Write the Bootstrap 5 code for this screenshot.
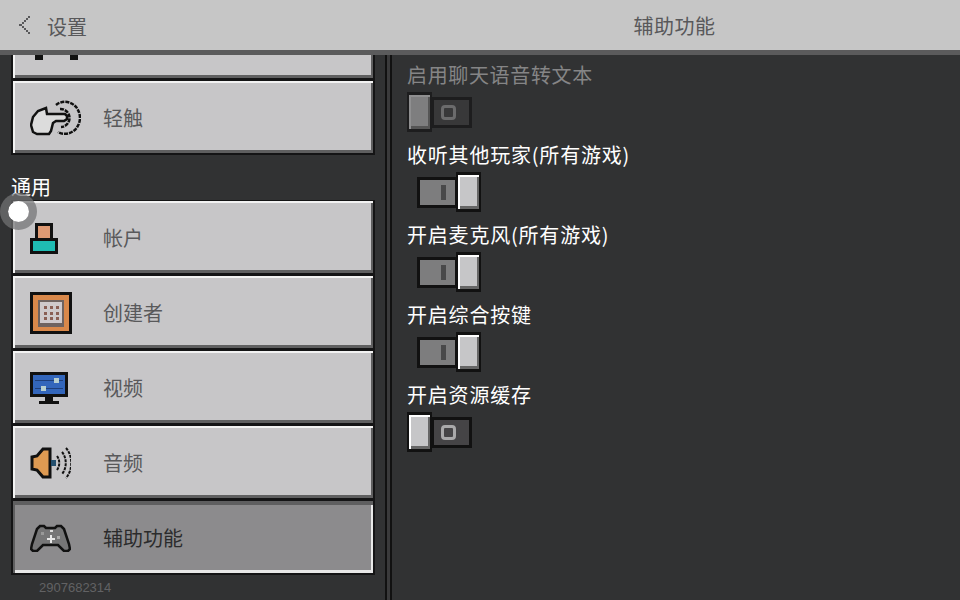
<!DOCTYPE html>
<html lang="zh-CN">
<head>
<meta charset="UTF-8">
<title>辅助功能</title>
<link href="https://cdn.jsdelivr.net/npm/bootstrap@5.3.0/dist/css/bootstrap.min.css" rel="stylesheet">
<style>
  html, body { height: 100%; }
  body {
    width: 960px; height: 600px; overflow: hidden; position: relative;
    background: #313233; color: #fff;
    font-family: "Noto Sans CJK SC", "Liberation Sans", sans-serif; font-size: 20px; line-height: 1;
  }
  .top-bar { height: 55px; background: #c6c6c6; border-bottom: 5px solid #5b5b5c; color: #58585a; }
  .top-left { width: 392px; padding-left: 19px; }
  .top-left svg { margin-right: 17px; }
  .top-left span { padding-top: 3px; }
  .top-title { padding: 1px 3px 0 0; letter-spacing: .5px; }
  .main-area { height: 545px; }
  .side-pane { width: 385px; padding-left: 11px; }
  .pane-rule { width: 7px; border-left: 2px solid #111; border-right: 2px solid #111; background: #3a3a3b; }
  .set-pane { padding-left: 15px; letter-spacing: .8px; }
  .menu-btn {
    width: 364px; height: 75px; border: solid #141415; border-width: 1px 2px 2px; padding-top: 2px;
    background: #c7c6c8; color: #59595b;
    box-shadow: inset 2px 2px 0 #f2f2f2, inset -2px -3px 0 #5f5f60;
  }
  .menu-btn.cut { height: 25px; overflow: hidden; border-top: 0; box-shadow: inset 2px 0 0 #f2f2f2, inset -2px -3px 0 #5f5f60; position: relative; }
  .menu-btn.active { background: #8c8b8d; color: #2b2b2c; box-shadow: inset 2px 4px 0 #5f5f60, inset -2px -3px 0 #e8e8e8; }
  .icon-box { width: 90px; padding-left: 17px; }
  .foot-mark { position: absolute; top: 0; width: 8px; height: 5px; background: #111; }
  .group-title { height: 45px; padding-bottom: 3px; }
  .build-id { font: 13px "Liberation Sans", Arial, sans-serif; color: #626264; padding: 5px 0 0 28px; letter-spacing: 0; }
  .opt-block { height: 80px; }
  .opt-label { height: 37px; padding-top: 10px; }
  .opt-label.dim { color: #858586; letter-spacing: .65px; }
  .sw-wrap { height: 40px; }
  .sw-wrap.on { padding-left: 10px; }
  .sw-track { width: 41px; height: 31px; background: #454446; border: 3px solid #111; display: flex; align-items: center; justify-content: center; }
  .sw-wrap.on .sw-track { background: #7d7d7e; margin-right: -2px; padding-left: 11px; }
  .sw-wrap:not(.on) .sw-track { margin-left: -1px; padding-right: 6px; }
  .sw-knob {
    width: 25px; height: 40px; background: #c6c6c8; border: solid #111; border-width: 3px 2px; position: relative; z-index: 1;
    box-shadow: inset 2px 2px 0 #fff, inset -2px -3px 0 #666;
  }
  .sw-ring { width: 15px; height: 15px; border: 3px solid #a9a9aa; border-radius: 4px; }
  .sw-bar { width: 5px; height: 15px; background: #49494a; }
  .is-off .sw-knob { background: #7e7e7f; box-shadow: inset 2px 2px 0 #8f8f90, inset -2px -3px 0 #555; border-color: #1d1d1e; }
  .is-off .sw-track { background: #383839; border-color: #1d1d1e; }
  .is-off .sw-ring { border-color: #6b6b6c; }
  .touch-dot {
    position: absolute; left: 0; top: 193px; width: 37px; height: 37px; border-radius: 50%;
    background: #fff; background-clip: padding-box; border: 8px solid rgba(115,115,117,.72);
  }
</style>
</head>
<body>
  <div class="top-bar d-flex align-items-center">
    <div class="top-left d-flex align-items-center">
      <svg width="11" height="18" viewBox="0 0 11 18" shape-rendering="crispEdges" fill="#58585a"><path d="M9 0h2v2H9zM7 2h2v2H7zM5 4h2v2H5zM3 6h2v2H3zM0 8h3v2H0zM3 10h2v2H3zM5 12h2v2H5zM7 14h2v2H7zM9 16h2v2H9z"/></svg>
      <span>设置</span>
    </div>
    <div class="top-title flex-grow-1 text-center">辅助功能</div>
  </div>

  <div class="main-area d-flex">
    <div class="side-pane">
      <div class="menu-btn cut"><span class="foot-mark" style="left:22px"></span><span class="foot-mark" style="left:57px"></span></div>
      <div class="menu-btn d-flex align-items-center">
        <div class="icon-box">
          <svg width="51" height="36" viewBox="0 0 51 36" fill="none" stroke="#111" stroke-width="2.5">
            <path stroke-dasharray="4 1" d="M26 5A15 16 0 1 1 28 32"/>
            <path stroke-dasharray="4 1" d="M30 9A9 9 0 1 1 31 27"/>
            <path fill="#dcdcdc" d="M1 25l2-8 5-6 8-3 1 6h18l2 2v3l-3 2H26l-3 2-2 8-2 3H7l-4-2z"/>
          </svg>
        </div>
        <span>轻触</span>
      </div>
      <div class="group-title d-flex align-items-end">通用</div>
      <div class="menu-btn d-flex align-items-center">
        <div class="icon-box">
          <svg width="28" height="31" viewBox="0 0 28 31" shape-rendering="crispEdges">
            <rect x="6.5" y="1.5" width="15" height="15" fill="#df9a74" stroke="#111" stroke-width="3"/>
            <rect x="1.5" y="16.5" width="25" height="13" fill="#1fbcb3" stroke="#111" stroke-width="3"/>
          </svg>
        </div>
        <span>帐户</span>
      </div>
      <div class="menu-btn d-flex align-items-center">
        <div class="icon-box">
          <svg width="42" height="42" viewBox="0 0 42 42" shape-rendering="crispEdges">
            <rect x="1.5" y="1.5" width="39" height="39" fill="#d9884a" stroke="#111" stroke-width="3"/>
            <rect x="8" y="8" width="26" height="27" fill="#6f6360"/>
            <rect x="10" y="10" width="22" height="21" fill="#cfc9cb"/>
            <g fill="#8a5e54">
              <rect x="14" y="14" width="3" height="3"/><rect x="20" y="14" width="3" height="3"/><rect x="26" y="14" width="3" height="3"/>
              <rect x="14" y="20" width="3" height="3"/><rect x="20" y="20" width="3" height="3"/><rect x="26" y="20" width="3" height="3"/>
              <rect x="14" y="25" width="3" height="3"/><rect x="20" y="25" width="3" height="3"/><rect x="26" y="25" width="3" height="3"/>
            </g>
          </svg>
        </div>
        <span>创建者</span>
      </div>
      <div class="menu-btn d-flex align-items-center">
        <div class="icon-box">
          <svg width="38" height="32" viewBox="0 0 38 32" shape-rendering="crispEdges">
            <rect x="1.5" y="1.5" width="35" height="22" fill="#3366bb" stroke="#111" stroke-width="3"/>
            <rect x="5" y="8" width="28" height="1" fill="#1f3f7a"/><rect x="5" y="16" width="28" height="1" fill="#1f3f7a"/>
            <rect x="24" y="6" width="5" height="5" fill="#b8cfd0"/><rect x="11" y="14" width="5" height="5" fill="#b8cfd0"/>
            <rect x="15" y="25" width="8" height="4" fill="#111"/><rect x="9" y="29" width="20" height="3" fill="#111"/>
          </svg>
        </div>
        <span>视频</span>
      </div>
      <div class="menu-btn d-flex align-items-center">
        <div class="icon-box">
          <svg width="41" height="32" viewBox="0 0 41 32" fill="none">
            <path fill="#de9a52" stroke="#111" stroke-width="3" d="M2 10l5-1 6-7h7v28h-7l-6-7-5-1z"/>
            <rect x="21" y="13" width="5" height="6" fill="#24506f"/>
            <path stroke="#111" stroke-width="2" stroke-dasharray="3 1" d="M27 9c3 4 3 10 0 14M32 5c5 6 5 16 0 22M36 1c7 8 7 22 0 30"/>
          </svg>
        </div>
        <span>音频</span>
      </div>
      <div class="menu-btn active d-flex align-items-center">
        <div class="icon-box">
          <svg width="41" height="28" viewBox="0 0 41 28">
            <path fill="#767677" stroke="#111" stroke-width="2.5" d="M10 2h4l2 2h9l2-2h4l3 3 5 15 1 5-2 2h-4l-6-6H13l-6 6H3l-2-2 1-5L7 5z"/>
            <path fill="#e8e8e8" d="M17 14h3v-3h2v3h3v2h-3v3h-2v-3h-3z"/>
            <rect x="20" y="6" width="3" height="2" fill="#ddd"/><rect x="27" y="12" width="3" height="3" fill="#aaa"/><rect x="11" y="8" width="3" height="3" fill="#999"/>
          </svg>
        </div>
        <span>辅助功能</span>
      </div>
      <div class="build-id">2907682314</div>
    </div>
    <div class="pane-rule"></div>
    <div class="set-pane flex-grow-1">
      <div class="opt-block is-off">
        <div class="opt-label dim">启用聊天语音转文本</div>
        <div class="sw-wrap d-flex align-items-center"><div class="sw-knob"></div><div class="sw-track"><div class="sw-ring"></div></div></div>
      </div>
      <div class="opt-block">
        <div class="opt-label">收听其他玩家(所有游戏)</div>
        <div class="sw-wrap on d-flex align-items-center"><div class="sw-track"><div class="sw-bar"></div></div><div class="sw-knob"></div></div>
      </div>
      <div class="opt-block">
        <div class="opt-label">开启麦克风(所有游戏)</div>
        <div class="sw-wrap on d-flex align-items-center"><div class="sw-track"><div class="sw-bar"></div></div><div class="sw-knob"></div></div>
      </div>
      <div class="opt-block">
        <div class="opt-label">开启综合按键</div>
        <div class="sw-wrap on d-flex align-items-center"><div class="sw-track"><div class="sw-bar"></div></div><div class="sw-knob"></div></div>
      </div>
      <div class="opt-block">
        <div class="opt-label">开启资源缓存</div>
        <div class="sw-wrap d-flex align-items-center"><div class="sw-knob"></div><div class="sw-track"><div class="sw-ring"></div></div></div>
      </div>
    </div>
  </div>
  <div class="touch-dot"></div>
  <script src="https://cdn.jsdelivr.net/npm/bootstrap@5.3.0/dist/js/bootstrap.bundle.min.js"></script>
</body>
</html>
